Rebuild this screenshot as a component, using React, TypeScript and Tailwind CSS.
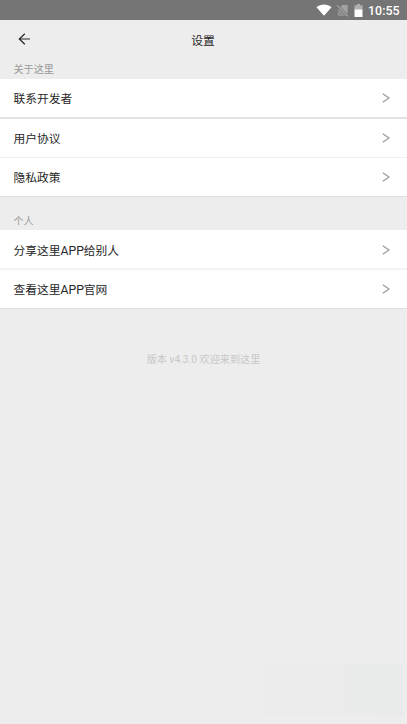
interface RowProps {
  title: string;
  border: string;
}

const StatusBar = () => (
  <div className="flex h-5 items-center justify-end bg-[#757575] pr-[7.5px] text-white">
    <svg width="16" height="12" viewBox="0 0 16 12" className="mr-[4px]">
      <path d="M0.5 3.2C5 -0.4 11 -0.4 15.5 3.2L8 11.8Z" fill="#fff" />
    </svg>
    <svg width="13" height="13" viewBox="0 0 13 13" className="mr-[5px]">
      <path d="M6.2 1H11.6V10L4.6 2.8Z" fill="#a3a3a3" />
      <path d="M3 5L10 12H1.8V6Z" fill="#8f8f8f" />
      <path d="M1 1.2L12 12.4" stroke="#a8a8a8" strokeWidth="1.1" />
    </svg>
    <svg width="9" height="13" viewBox="0 0 9 13" className="mr-[5.5px]">
      <path d="M3 0H6V1.3H8.5V6H0.5V1.3H3Z" fill="#b0b0b0" />
      <path d="M0.5 5.5H8.5V13H0.5Z" fill="#fff" />
    </svg>
    <span className="pt-px font-[Roboto] text-[12.4px] leading-5 font-medium">10:55</span>
  </div>
);

const Row = ({ title, border }: RowProps) => (
  <div
    className={`flex items-center justify-between bg-white pr-[17px] pl-[13.5px] ${border}`}
  >
    <span className="pt-[2px] text-[11.75px] leading-4 text-[#262626]">
      {title.split(/(APP)/).map((part) =>
        part === "APP" ? (
          <span key={part} className="text-[12.2px] leading-none">
            {part}
          </span>
        ) : (
          part
        )
      )}
    </span>
    <svg width="8" height="10" viewBox="0 0 8 10" fill="none">
      <path d="M0.8 0.7L7 5L0.8 9.3" stroke="#999" strokeWidth="1.2" />
    </svg>
  </div>
);

export default function App() {
  return (
    <div className="flex h-[724px] w-[407px] flex-col overflow-hidden bg-[#ededed] font-[Roboto,'Noto_Sans_CJK_SC',sans-serif]">
      <StatusBar />
      <header className="grid h-10 grid-cols-[1fr_auto_1fr] items-center">
        <button type="button" className="mb-[2px] ml-[18px] w-fit" aria-label="返回">
          <svg width="13" height="12" viewBox="0 0 13 12" fill="none">
            <path
              d="M6.8 0.7L1.3 6L6.8 11.3M1.3 6H12"
              stroke="#262626"
              strokeWidth="1.2"
            />
          </svg>
        </button>
        <h1 className="mr-px pt-[2px] text-[11.8px] leading-4 text-[#262626]">设置</h1>
      </header>

      <h2 className="h-[19px] pl-[13.5px] text-[10.1px] leading-[19px] text-[#999]">
        关于这里
      </h2>
      <section>
        <Row title="联系开发者" border="h-10 border-b-2 border-[#e2e2e2]" />
        <Row title="用户协议" border="h-[39px] border-b border-[#eeeeee]" />
        <Row title="隐私政策" border="h-[39px] border-b border-[#e0e0e0]" />
      </section>

      <h2 className="h-[33px] pt-[15px] pl-[13.5px] text-[10.1px] leading-[19px] text-[#999]">
        个人
      </h2>
      <section>
        <Row title="分享这里APP给别人" border="h-10 border-b-2 border-[#f3f3f3] pt-[2px]" />
        <Row title="查看这里APP官网" border="h-[39px] border-b border-[#e0e0e0]" />
      </section>

      <p className="mt-[42px] text-center text-[10.1px] leading-[18px] tracking-[0.04px] text-[#c8c8c8]">
        版本 v4.3.0 欢迎来到这里
      </p>
      <div className="mt-auto mr-1 mb-[9px] ml-auto h-[51px] w-[140px] bg-linear-to-r from-[#ebebeb] to-[#e9ebea]" />
    </div>
  );
}
